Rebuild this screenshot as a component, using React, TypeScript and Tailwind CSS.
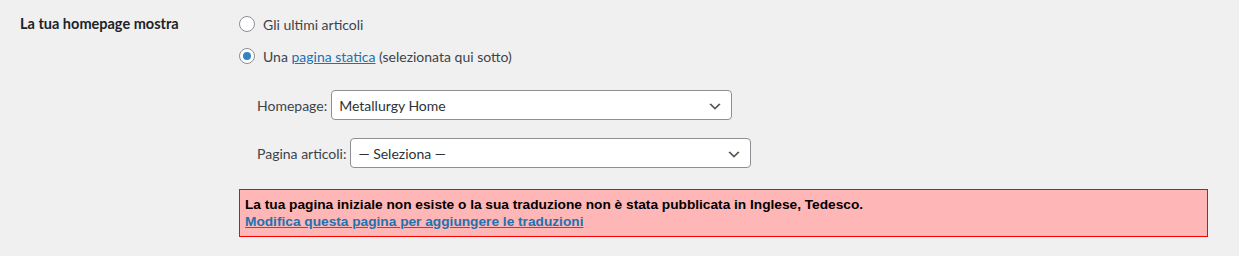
import React from "react";

function Chevron() {
  return (
    <svg width="16" height="16" viewBox="0 0 20 20" className="absolute right-[8px] top-1/2 -translate-y-[40%]">
      <path d="M5 6l5 5 5-5 2 1-7 7-7-7 2-1z" fill="#555" />
    </svg>
  );
}

function Radio({ checked }: { checked?: boolean }) {
  return (
    <span className="w-4 h-4 rounded-full border border-[#8c8f94] bg-white flex items-center justify-center shrink-0">
      {checked && <span className="w-2 h-2 rounded-full bg-[#3582c4]" />}
    </span>
  );
}

function SelectBox({ value, width }: { value: string; width: string }) {
  return (
    <div className={`relative h-[30px] ${width} bg-white border border-[#8c8f94] rounded-[4px] flex items-center pl-[7px] text-[14px] text-[#2c3338]`}>
      {value}
      <Chevron />
    </div>
  );
}

export default function App() {
  return (
    <div className="bg-[#f0f0f1] min-h-[256px] w-full text-[14px] text-[#3c434a]" style={{ fontFamily: "Lato, 'Liberation Sans', sans-serif" }}>
      <div className="flex pl-5 pt-4">
        <div className="w-[219px] h-4 flex items-center font-bold text-[14.5px] text-[#1d2327]">La tua homepage mostra</div>

        <div className="flex flex-col">
          <label className="h-4 flex items-center gap-2">
            <Radio />
            <span>Gli ultimi articoli</span>
          </label>
          <label className="h-4 mt-4 flex items-center gap-2">
            <Radio checked />
            <span>
              Una <a className="text-[#2271b1] underline">pagina statica</a> (selezionata qui sotto)
            </span>
          </label>

          <div className="ml-[18px] mt-[26px] flex items-center gap-1">
            <span>Homepage:</span>
            <SelectBox value="Metallurgy Home" width="w-[401px]" />
          </div>
          <div className="ml-[18px] mt-[18px] flex items-center gap-1">
            <span>Pagina articoli:</span>
            <SelectBox value="— Seleziona —" width="w-[401px]" />
          </div>

          <div
            className="mt-[21px] w-[969px] border border-[#ff0000] bg-[#ffb6b6] px-[5px] py-[6px] text-[13.7px] leading-[17px] font-bold"
            style={{ fontFamily: "'Liberation Sans', sans-serif" }}
          >
            <p className="text-black">La tua pagina iniziale non esiste o la sua traduzione non è stata pubblicata in Inglese, Tedesco.</p>
            <a className="text-[#2271b1] underline">Modifica questa pagina per aggiungere le traduzioni</a>
          </div>
        </div>
      </div>
    </div>
  );
}
